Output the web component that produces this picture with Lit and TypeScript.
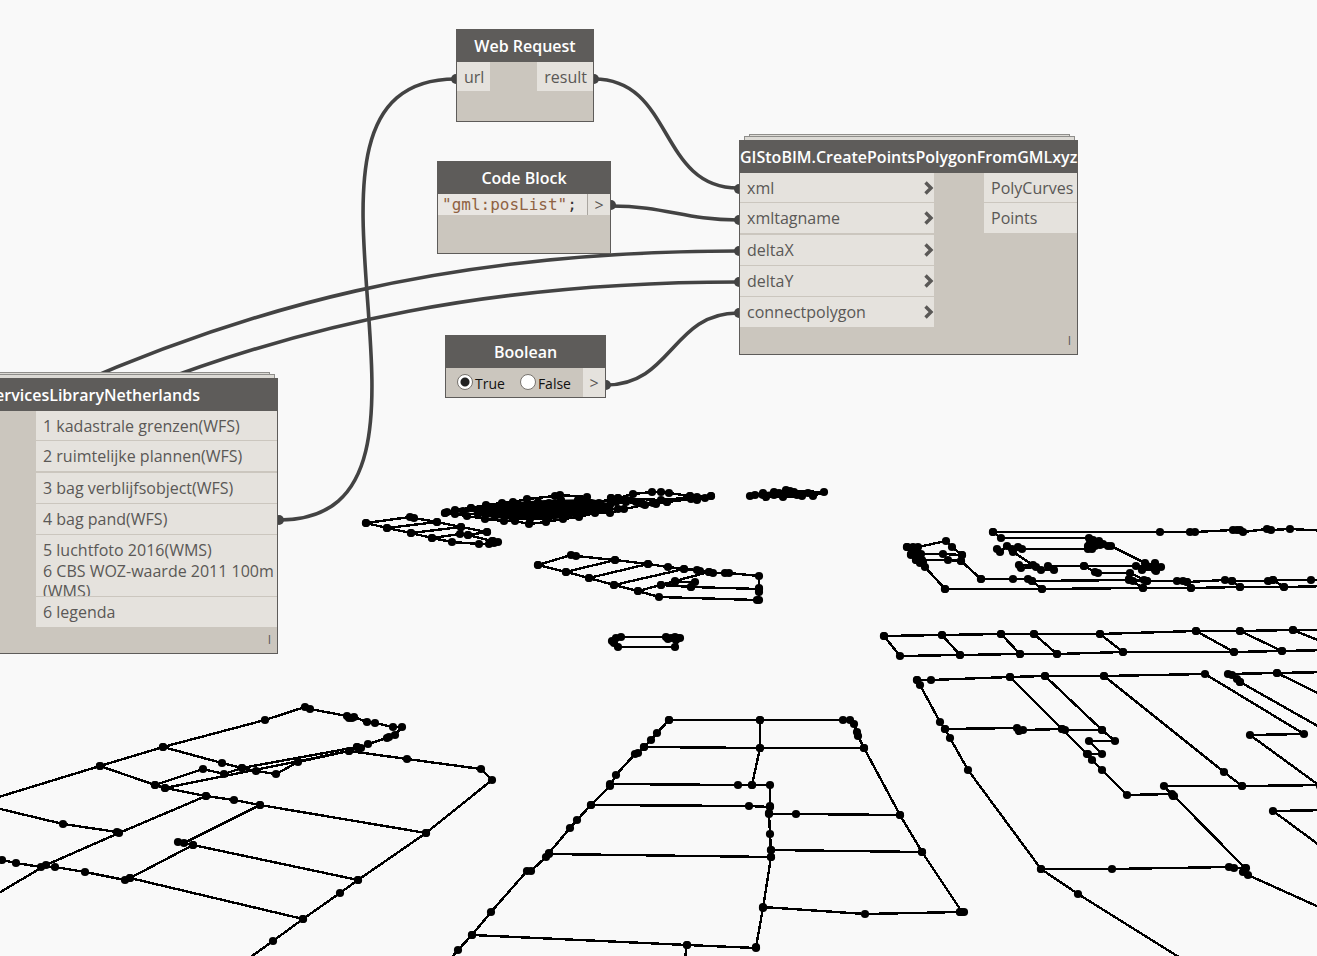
import { LitElement, html, svg, css } from "lit";
import { customElement, property } from "lit/decorators.js";

/** Footprint outlines: every vertex is also drawn as a point. */
const OUTLINES: string[] = [
  // centre block
  "669,720 657,733 651,740 644,747 638,753 635,754 616,775 610,786 591,805 577,820 570,828 549,853 546,857 531,871 527,871 491,912 472,935 458,950 446,964",
  "669,720 760,720 843,720 850,720 854,724 857,732 858,736 864,748 900,815 922,852 962,912 960,912 964,912",
  "644,747 760,748 864,748",
  "760,720 760,748 752,785",
  "610,784 738,785 752,785 770,785 770,806 769,813 770,834 771,850 771,857 763,908 756,947",
  "591,805 749,806 770,807",
  "769,814 796,814 900,815",
  "771,850 922,852",
  "549,854 771,857",
  "763,907 865,914 960,912",
  "472,935 687,945 756,948",
  "687,945 684,964",
  // left block
  "-8,799 100,766 163,747 265,720 305,707 310,709 347,716 352,718 349,718 354,717 367,722 375,723 393,727 402,727 395,735 389,737 387,738 368,744 361,748 357,747 349,751 298,762 276,774 256,771 242,768 222,763 163,747",
  "155,785 203,769 224,774 242,768 357,747",
  "100,766 155,785 165,788 206,796 234,800 260,805 426,833",
  "165,788 349,751 407,759 481,769 492,780 426,833 358,880 340,893 303,919 273,941 245,961",
  "260,805 184,843 178,842 193,845 358,880",
  "206,796 119,833 46,865 -8,897",
  "-8,807 63,824 117,832",
  "2,860 16,863 41,867 55,867 85,872 125,880 130,878 303,919",
  "193,845 130,878",
  // right block
  "917,680 931,680 1010,677 1045,676 1104,676 1205,674 1304,734 1250,735 1320,786",
  "917,680 920,685 940,722 945,729 950,738 968,770 1041,869 1078,894 1190,964",
  "945,729 1017,728 1019,731 1023,730 1062,729 1065,730 1102,730",
  "1010,677 1062,729 1087,754 1092,760 1102,770 1127,795 1172,794 1174,796 1245,868",
  "1045,676 1102,730 1115,741 1089,741 1102,754 1088,754",
  "1104,676 1224,772 1242,786",
  "1173,796 1164,786 1242,786 1330,785",
  "1041,869 1112,869 1229,867 1234,868 1246,868 1243,872 1248,875 1330,912",
  "1240,682 1237,679 1232,675 1228,674 1277,673 1330,672",
  "1240,682 1330,733",
  "1277,673 1330,699",
  "1330,810 1273,811 1330,853",
  // narrow band
  "884,636 942,635 1001,634 1034,634 1100,634 1196,631 1240,631 1293,630 1330,630",
  "884,636 900,656 960,655 1020,654 1057,654 1123,652 1234,652 1282,651 1330,650",
  "942,635 960,655",
  "1001,634 1020,654",
  "1034,634 1057,654",
  "1100,634 1123,652",
  "1196,631 1234,652",
  "1240,631 1282,651",
  "1293,630 1330,645",
  // upper right group
  "993,532 1160,532 1190,532 1195,532 1233,530 1237,530 1240,530 1243,532 1267,529 1271,530 1290,529 1330,531",
  "993,532 1001,538 1089,538 1093,540 1099,541 1088,546 1092,549 1097,543 1100,545 1108,546 1111,546 1145,563 1150,567 1155,563 1161,567 1155,570 1142,570 1147,566 1153,567 1156,571",
  "997,549 1000,552 1007,546 1012,549 1018,547 1022,549 1088,549 1090,543 1095,546 1103,544",
  "1013,552 1033,565 1019,565 1021,568 1036,567 1041,570 1054,570 1048,566 1084,566 1136,566 1155,567",
  "1084,566 1095,572 1098,573 1130,573 1147,581",
  "981,579 1013,579 1028,579 1032,581 1129,580 1133,581 1144,580 1147,581 1177,581 1183,581 1187,582 1225,580 1232,581 1268,581 1273,580 1311,580 1330,581",
  "945,589 1042,589 1143,588 1191,588 1240,587 1284,587 1330,586",
  "1032,581 1042,589",
  "1129,579 1143,588",
  "1187,582 1191,588",
  "1232,581 1240,587",
  "1273,580 1284,587",
  "907,547 913,547 918,547 946,541 952,547 962,555 961,561 981,579",
  "907,547 911,554 916,560 920,563 925,567 945,589",
  "911,555 921,554 943,554 962,555",
  "916,560 922,560 948,560 961,561",
  "913,551 917,550 917,557 923,562",
  // middle block
  "538,565 571,555 576,556 615,560 648,564 668,567 684,569 697,570 700,571 709,572 713,573 725,573 729,573 759,576 759,588 759,592 759,600",
  "538,565 566,572 589,578 614,585 638,591 659,597 757,600",
  "566,572 615,560",
  "589,578 648,564",
  "614,585 684,569",
  "638,591 661,585 675,581 709,572",
  "675,582 695,582 691,587 661,585",
  "691,587 759,589",
  "612,641 616,638 621,637 666,637 671,638 675,637 680,638 675,647 618,647 614,643",
  "668,639 676,640 678,638",
  // upper left group
  "366,523 410,517 414,518 437,522 461,527 487,532",
  "366,523 387,528 411,533 432,538 452,542 479,544 489,544 493,541 498,542 494,543",
  "387,528 437,522",
  "411,533 461,527",
  "432,538 460,534 468,535 487,532",
  "468,535 492,541",
  "445,513 455,510 471,508 486,505 502,503 513,502 527,499 555,496 560,495 587,497 578,500 599,503 611,498",
  "445,513 467,516 485,519 504,521 515,521 529,524 546,522 563,519 579,517 595,513 610,513 624,509 645,505 656,504 667,502 691,499 697,500 705,498 711,496",
  "611,498 618,498 633,494 652,492 661,492 669,493 690,496 711,496",
  "447,512 463,511 479,509 494,507 511,505",
  "455,514 478,514 495,516 512,517 530,519 547,518",
  "471,508 490,511 508,508 523,511 541,506 557,509 573,504 590,508 610,505 626,502 640,503",
  "485,514 500,511 515,516 531,513 549,517 565,511 582,513 603,510 618,509",
  "500,506 519,505 538,502 549,503 561,500 572,506 584,503 611,500 616,502 641,502",
  "486,507 505,515 525,507 545,513 561,506 574,511 600,507",
  "618,500 627,500 636,502 643,504 653,503 667,502 690,496",
  "618,498 661,500 697,497",
  "750,496 755,495 763,493 766,497 774,492 779,493 783,497 786,490 790,493 794,492 797,495 802,496 808,493 813,496 824,492 790,491 774,495 763,495",
];

/** Areas where the footprints lie so close that they fill in. */
const MASSES: string[] = [
  "470,511 486,505 515,502 545,500 592,499 612,504 606,512 580,516 548,520 515,520 486,517",
  "755,493 775,491 788,489 815,493 800,498 760,498",
  "1088,540 1098,540 1110,546 1090,549",
];

const WIRES: string[] = [
  "M279 520C489 520 246 79 456 79",
  "M594 79C674 79 658 188 738 188",
  "M611 206C666 206 684 220 738 220",
  "M70 387C240 312 440 251 738 251",
  "M145 387C305 325 490 282 738 282",
  "M606 385C672 385 672 313 738 313",
];

const PLUGS: [number, number][] = [
  [279, 520], [456, 79], [594, 79], [611, 205], [606, 385],
  [739, 189], [739, 220], [739, 251], [739, 282], [739, 313],
];

@customElement("geometry-preview")
class GeometryPreview extends LitElement {
  static styles = css`
    :host { display: block; }
    svg { display: block; width: 100%; height: 100%; overflow: hidden; }
    .edge { fill: none; stroke: #000; stroke-width: 2.4; stroke-linejoin: round; shape-rendering: crispEdges; }
    .mass { fill: #000; }
  `;
  render() {
    return html`<svg aria-hidden="true">
      ${MASSES.map((points) => svg`<polygon class="mass" points=${points}></polygon>`)}
      ${OUTLINES.map((points) => svg`
        <polyline class="edge" points=${points}></polyline>
        ${points.split(" ").map((p) => {
          const [x, y] = p.split(",");
          return svg`<circle cx=${x} cy=${y} r="4.1"></circle>`;
        })}`)}
    </svg>`;
  }
}

@customElement("wire-layer")
class WireLayer extends LitElement {
  static styles = css`
    :host { display: block; }
    svg { display: block; width: 100%; height: 100%; overflow: hidden; }
    path { fill: none; stroke: #434343; stroke-width: 3.6; }
    circle { fill: #434343; }
  `;
  render() {
    return html`<svg aria-hidden="true">
      ${WIRES.map((d) => svg`<path d=${d}></path>`)}
      ${PLUGS.map(([x, y]) => svg`<circle cx=${x} cy=${y} r="5"></circle>`)}
    </svg>`;
  }
}

@customElement("graph-node")
class GraphNode extends LitElement {
  @property() heading = "";
  @property({ type: Boolean, reflect: true }) stacked = false;
  static styles = css`
    :host { display: block; }
    .sheet { position: absolute; box-sizing: border-box; border: 1px solid #8f8e8b; background: #dcdad5; height: 12px; }
    .back { left: 10px; right: 8px; top: -6px; }
    .front { left: 5px; right: 3px; top: -4px; }
    .node {
      position: relative; display: flex; flex-direction: column; box-sizing: border-box;
      height: 100%; border: 1px solid #5e5c5a; background: #cbc6be;
    }
    h2 {
      margin: 0; height: 32px; background: #5e5c5a; color: #fff; white-space: nowrap;
      font: 600 16px/32px "Open Sans", "Noto Sans", sans-serif; text-align: center;
    }
    :host(.library) h2 { text-align: right; padding-right: 77px; }
  `;
  render() {
    return html`
      ${this.stacked ? html`<div class="sheet back"></div><div class="sheet front"></div>` : ""}
      <section class="node"><h2>${this.heading}</h2><slot></slot></section>`;
  }
}

@customElement("app-root")
class AppRoot extends LitElement {
  static styles = css`
    :host {
      display: block; position: relative; min-height: 100vh; overflow: hidden; background: #f9f9f9;
      color: #5a5856; font: 16px/20px "Open Sans", "Noto Sans", sans-serif;
    }
    .layer { position: absolute; inset: 0; }
    graph-node { position: absolute; }
    .request { left: 456px; top: 29px; width: 138px; height: 93px; }
    .code { left: 437px; top: 161px; width: 174px; height: 93px; }
    .create { left: 739px; top: 140px; width: 339px; height: 215px; }
    .bool { left: 445px; top: 335px; width: 161px; height: 63px; }
    .library { left: -20px; top: 378px; width: 298px; height: 276px; }
    .row { display: flex; justify-content: space-between; align-items: flex-start; }
    .end { justify-content: flex-end; }
    ul { margin: 0; padding: 0; list-style: none; display: grid; gap: 1px; }
    .port {
      display: flex; align-items: center; justify-content: space-between; box-sizing: border-box;
      height: 30px; padding: 0 6px; background: #e5e2dd; white-space: nowrap;
    }
    .request .port { height: 29px; padding-left: 7px; }
    li:first-child { height: 29px; }
    li:nth-child(2) { margin-bottom: 1px; }
    .inputs { width: 194px; }
    .inputs .port { padding: 0 0 0 7px; }
    .create .outputs { width: 93px; }
    .outputs .port { padding: 0 2px 0 7px; }
    .library .outputs { width: 241px; }
    .library .double { white-space: normal; margin-top: -1px; height: 31px; overflow: hidden; }
    .chevron { width: 10px; height: 14px; fill: none; stroke: #5a5856; stroke-width: 3.4; }
    .lacing { margin: auto 6px 4px auto; font-size: 12px; line-height: 18px; }
    .editor {
      flex: 1; height: 21px; padding-left: 4px; background: #e9e6e2; color: #333;
      border-right: 1px solid #aaa6a0; font: 16px/21px "DejaVu Sans Mono", monospace; white-space: pre;
    }
    .string { color: #8f6242; }
    .out { display: grid; place-items: center; width: 22px; height: 21px; background: #e5e2dd; }
    .bool .out { height: 29px; }
    .choices { display: flex; flex: 1; gap: 15px; padding: 6px 0 0 11px; }
    .choices label { display: flex; gap: 2px; color: #111; font-size: 14px; line-height: 20px; }
    input {
      appearance: none; box-sizing: border-box; width: 16px; height: 16px; margin: 0;
      border: 1px solid #77736e; border-radius: 50%; background: #fff;
    }
    input:checked { background: radial-gradient(circle, #222 4px, #fff 5px); }
  `;

  private inputPort(name: string) {
    return html`<li class="port"><span>${name}</span>
      <svg class="chevron" viewBox="0 0 10 14" aria-hidden="true"><path d="M1.5 1.5L7 7L1.5 12.5"></path></svg></li>`;
  }

  render() {
    return html`
      <geometry-preview class="layer"></geometry-preview>
      <wire-layer class="layer"></wire-layer>
      <graph-node class="request" heading="Web Request">
        <div class="row"><span class="port">url</span><span class="port">result</span></div>
      </graph-node>
      <graph-node class="code" heading="Code Block">
        <div class="row">
          <code class="editor"><span class="string">"gml:posList"</span>;</code><span class="out">&gt;</span>
        </div>
      </graph-node>
      <graph-node class="create" stacked heading="GIStoBIM.CreatePointsPolygonFromGMLxyz">
        <div class="row">
          <ul class="inputs">
            ${["xml", "xmltagname", "deltaX", "deltaY", "connectpolygon"].map((n) => this.inputPort(n))}
          </ul>
          <ul class="outputs"><li class="port">PolyCurves</li><li class="port">Points</li></ul>
        </div>
        <span class="lacing">I</span>
      </graph-node>
      <graph-node class="bool" heading="Boolean">
        <div class="row">
          <div class="choices">
            <label><input type="radio" name="value" checked />True</label>
            <label><input type="radio" name="value" />False</label>
          </div>
          <span class="out">&gt;</span>
        </div>
      </graph-node>
      <graph-node class="library" stacked heading="servicesLibraryNetherlands">
        <div class="row end">
          <ul class="outputs">
            <li class="port">1 kadastrale grenzen(WFS)</li>
            <li class="port">2 ruimtelijke plannen(WFS)</li>
            <li class="port">3 bag verblijfsobject(WFS)</li>
            <li class="port">4 bag pand(WFS)</li>
            <li class="port">5 luchtfoto 2016(WMS)</li>
            <li class="port double">6 CBS WOZ-waarde 2011 100m (WMS)</li>
            <li class="port">6 legenda</li>
          </ul>
        </div>
        <span class="lacing">I</span>
      </graph-node>`;
  }
}
